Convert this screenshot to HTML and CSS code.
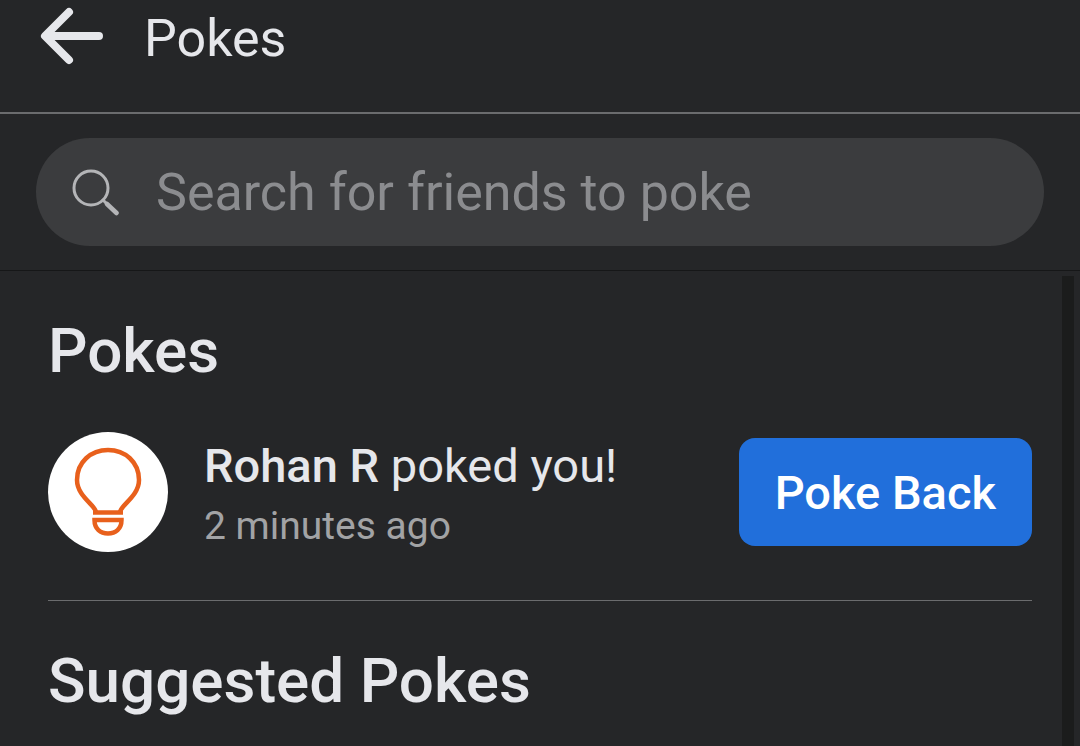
FILE: index.html
```html
<!DOCTYPE html>
<html lang="en">
<head>
    <meta charset="UTF-8">
    <meta name="viewport" content="width=device-width, initial-scale=1">
    <title>Pokes</title>
    <link rel="stylesheet" href="styles.css">
</head>
<body>

    <header class="topbar">
        <a href="#" class="back" aria-label="Back">
            <svg width="64" height="58" viewBox="0 0 64 58" fill="none" stroke="currentColor" stroke-width="8" stroke-linecap="round" stroke-linejoin="round">
                <path d="M59 29H6M29 5L5 29l24 24"/>
            </svg>
        </a>
        <h1>Pokes</h1>
    </header>

    <form class="search">
        <label class="search-box">
            <svg width="48" height="48" viewBox="0 0 48 48" fill="none" stroke="currentColor" stroke-linecap="round">
                <circle cx="19" cy="20" r="17" stroke-width="3"/>
                <path d="M31 32l4 4" stroke-width="3"/>
                <path d="M35 36l9.500 9" stroke-width="4.500"/>
            </svg>
            <input type="text" placeholder="Search for friends to poke" aria-label="Search for friends to poke">
        </label>
    </form>

    <div class="page">
        <main class="content">
            <section class="pokes">
                <h2>Pokes</h2>
                <div class="poke">
                    <svg class="avatar" width="120" height="120" viewBox="0 0 120 120" fill="none" stroke="#e8601c" stroke-width="4.500">
                        <circle cx="60" cy="60" r="60" fill="#fff" stroke="none"/>
                        <path d="M48 80C47 73 29 64 29 48C29 30 43 18 60 18S91 30 91 48C91 64 73 73 72 80"/>
                        <path d="M45 80.500h30"/>
                        <path d="M46.500 88h27c0 9-6 13.500-13.500 13.500S46.500 97 46.500 88z"/>
                    </svg>
                    <div class="poke-text">
                        <p class="poke-name"><b>Rohan R</b> poked you!</p>
                        <p class="poke-time">2 minutes ago</p>
                    </div>
                    <button type="button" class="poke-back">Poke Back</button>
                </div>
            </section>
            <section class="suggested">
                <h2>Suggested Pokes</h2>
            </section>
        </main>
        <div class="track"></div>
    </div>

</body>
</html>
```
FILE: styles.css
```css
* {
    box-sizing: border-box;
}

body {
    display: flex;
    flex-direction: column;
    min-height: 100vh;
    margin: 0;
    background: #252628;
    color: #e6e7eb;
    font-family: Roboto, sans-serif;
}

h1, h2, p {
    margin: 0;
}

svg {
    display: block;
    flex: none;
}

.topbar {
    display: flex;
    align-items: flex-start;
    gap: 40px;
    padding: 0 40px 34px;
    border-bottom: 2px solid #6b6c6e;
}

.back {
    padding-top: 7px;
    color: inherit;
}

h1 {
    font-size: 52px;
    font-weight: 400;
    line-height: 78px;
}

.search {
    padding: 24px 36px;
    border-bottom: 1px solid #161718;
}

.search-box {
    display: flex;
    align-items: center;
    gap: 36px;
    height: 108px;
    padding: 0 36px;
    border-radius: 54px;
    background: #3b3c3e;
    color: #b4b5b7;
}

.search-box input {
    flex: 1;
    min-width: 0;
    padding: 0;
    border: none;
    outline: none;
    background: none;
    color: #e6e7eb;
    font-family: inherit;
    font-size: 52px;
    font-weight: 400;
}

.search-box input::placeholder {
    color: #8b8c8f;
    opacity: 1;
}

.page {
    display: flex;
    flex: 1;
    gap: 30px;
    padding-right: 6px;
}

.content {
    flex: 1;
    padding-left: 48px;
}

.track {
    width: 12px;
    margin-top: 5px;
    background: #1b1c1c;
}

h2 {
    font-size: 62px;
    font-weight: 500;
    line-height: 72px;
}

.pokes {
    padding: 44px 0;
    border-bottom: 1px solid #6b6c6e;
}

.suggested {
    padding-top: 44px;
}

.poke {
    display: flex;
    align-items: center;
    gap: 36px;
    margin-top: 41px;
}

.poke-text {
    flex: 1;
    padding-top: 8px;
    line-height: 60px;
}

.poke-name {
    font-size: 47px;
    font-weight: 400;
}

.poke-name b {
    font-weight: 500;
}

.poke-time {
    color: #a2a3a5;
    font-size: 39px;
    font-weight: 400;
}

.poke-back {
    height: 108px;
    padding: 0 36px;
    border: none;
    border-radius: 16px;
    background: #216fdb;
    color: #fff;
    font-family: inherit;
    font-size: 47px;
    font-weight: 500;
    cursor: pointer;
}
```
